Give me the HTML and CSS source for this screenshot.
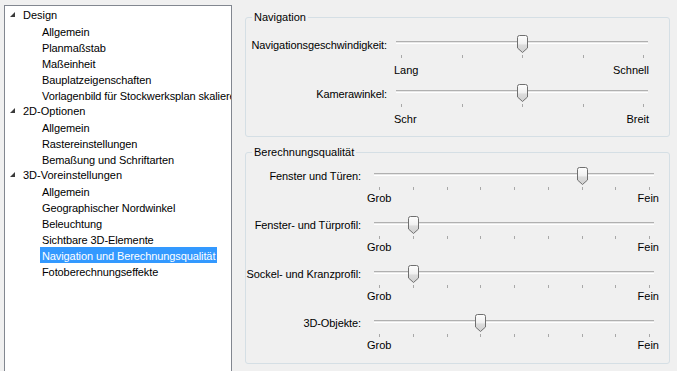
FILE: index.html
```html
<!DOCTYPE html>
<html lang="de">
<head>
  <meta charset="UTF-8">
  <title>Optionen</title>
  <link rel="stylesheet" href="styles.css">
</head>
<body>

  <div class="dialog">

    <!-- Baum links -->
    <div class="tree">
      <div class="node"><span class="arrow"></span>Design</div>
      <div class="leaf"><span>Allgemein</span></div>
      <div class="leaf"><span>Planmaßstab</span></div>
      <div class="leaf"><span>Maßeinheit</span></div>
      <div class="leaf"><span>Bauplatzeigenschaften</span></div>
      <div class="leaf"><span>Vorlagenbild für Stockwerksplan skalieren</span></div>
      <div class="node"><span class="arrow"></span>2D-Optionen</div>
      <div class="leaf"><span>Allgemein</span></div>
      <div class="leaf"><span>Rastereinstellungen</span></div>
      <div class="leaf"><span>Bemaßung und Schriftarten</span></div>
      <div class="node"><span class="arrow"></span>3D-Voreinstellungen</div>
      <div class="leaf"><span>Allgemein</span></div>
      <div class="leaf"><span>Geographischer Nordwinkel</span></div>
      <div class="leaf"><span>Beleuchtung</span></div>
      <div class="leaf"><span>Sichtbare 3D-Elemente</span></div>
      <div class="leaf selected"><span>Navigation und Berechnungsqualität</span></div>
      <div class="leaf"><span>Fotoberechnungseffekte</span></div>
    </div>

    <!-- Einstellungen rechts -->
    <div class="panel">

      <fieldset class="group nav">
        <legend>Navigation</legend>

        <div class="row">
          <label>Navigationsgeschwindigkeit:</label>
          <div class="slider">
            <div class="bar"><div class="track"></div><span class="thumb" style="--v:0.5"><svg width="11" height="18" viewBox="0 0 11 18"><defs><linearGradient id="tg" x1="0" y1="0" x2="0" y2="1"><stop offset="0" stop-color="#fdfdfd"/><stop offset="0.5" stop-color="#f0f0f0"/><stop offset="0.55" stop-color="#dcdcdc"/><stop offset="1" stop-color="#d0d0d0"/></linearGradient></defs><path d="M0.5 2.5 Q0.5 0.5 2.5 0.5 H8.5 Q10.5 0.5 10.5 2.5 V13 L5.5 17.5 L0.5 13 Z" fill="url(#tg)" stroke="#6f6f6f"/></svg></span></div>
            <div class="ticks"><i></i><i></i><i></i><i></i><i></i></div>
            <div class="ends"><span>Lang</span><span>Schnell</span></div>
          </div>
        </div>

        <div class="row">
          <label>Kamerawinkel:</label>
          <div class="slider">
            <div class="bar"><div class="track"></div><span class="thumb" style="--v:0.5"><svg width="11" height="18" viewBox="0 0 11 18"><path d="M0.5 2.5 Q0.5 0.5 2.5 0.5 H8.5 Q10.5 0.5 10.5 2.5 V13 L5.5 17.5 L0.5 13 Z" fill="url(#tg)" stroke="#6f6f6f"/></svg></span></div>
            <div class="ticks"><i></i><i></i><i></i><i></i><i></i></div>
            <div class="ends"><span>Schr</span><span>Breit</span></div>
          </div>
        </div>
      </fieldset>

      <fieldset class="group quality">
        <legend>Berechnungsqualität</legend>

        <div class="row">
          <label>Fenster und Türen:</label>
          <div class="slider">
            <div class="bar"><div class="track"></div><span class="thumb" style="--v:0.75"><svg width="11" height="18" viewBox="0 0 11 18"><path d="M0.5 2.5 Q0.5 0.5 2.5 0.5 H8.5 Q10.5 0.5 10.5 2.5 V13 L5.5 17.5 L0.5 13 Z" fill="url(#tg)" stroke="#6f6f6f"/></svg></span></div>
            <div class="ticks"><i></i><i></i><i></i><i></i><i></i><i></i><i></i><i></i><i></i></div>
            <div class="ends"><span>Grob</span><span>Fein</span></div>
          </div>
        </div>

        <div class="row">
          <label>Fenster- und Türprofil:</label>
          <div class="slider">
            <div class="bar"><div class="track"></div><span class="thumb" style="--v:0.125"><svg width="11" height="18" viewBox="0 0 11 18"><path d="M0.5 2.5 Q0.5 0.5 2.5 0.5 H8.5 Q10.5 0.5 10.5 2.5 V13 L5.5 17.5 L0.5 13 Z" fill="url(#tg)" stroke="#6f6f6f"/></svg></span></div>
            <div class="ticks"><i></i><i></i><i></i><i></i><i></i><i></i><i></i><i></i><i></i></div>
            <div class="ends"><span>Grob</span><span>Fein</span></div>
          </div>
        </div>

        <div class="row">
          <label>Sockel- und Kranzprofil:</label>
          <div class="slider">
            <div class="bar"><div class="track"></div><span class="thumb" style="--v:0.125"><svg width="11" height="18" viewBox="0 0 11 18"><path d="M0.5 2.5 Q0.5 0.5 2.5 0.5 H8.5 Q10.5 0.5 10.5 2.5 V13 L5.5 17.5 L0.5 13 Z" fill="url(#tg)" stroke="#6f6f6f"/></svg></span></div>
            <div class="ticks"><i></i><i></i><i></i><i></i><i></i><i></i><i></i><i></i><i></i></div>
            <div class="ends"><span>Grob</span><span>Fein</span></div>
          </div>
        </div>

        <div class="row">
          <label>3D-Objekte:</label>
          <div class="slider">
            <div class="bar"><div class="track"></div><span class="thumb" style="--v:0.375"><svg width="11" height="18" viewBox="0 0 11 18"><path d="M0.5 2.5 Q0.5 0.5 2.5 0.5 H8.5 Q10.5 0.5 10.5 2.5 V13 L5.5 17.5 L0.5 13 Z" fill="url(#tg)" stroke="#6f6f6f"/></svg></span></div>
            <div class="ticks"><i></i><i></i><i></i><i></i><i></i><i></i><i></i><i></i><i></i></div>
            <div class="ends"><span>Grob</span><span>Fein</span></div>
          </div>
        </div>
      </fieldset>

    </div>
  </div>

</body>
</html>
```

FILE: styles.css
```css
body {
  margin: 0;
  background: #f0f0f0;
  font-family: "Liberation Sans", Arial, sans-serif;
  font-size: 11px;
  color: #000;
  overflow: hidden;
}

.dialog {
  display: flex;
  gap: 13px;
  padding-left: 4px;
}

/* Baum */

.tree {
  width: 228px;
  height: 400px;
  box-sizing: border-box;
  margin-top: 5px;
  padding-top: 1px;
  border: 1px solid #828790;
  background: #fff;
  overflow: hidden;
}

.node, .leaf {
  height: 16px;
  line-height: 18px;
  white-space: nowrap;
}

.node {
  display: flex;
  align-items: center;
  padding-left: 5px;
  gap: 8px;
}

.arrow {
  width: 0;
  height: 0;
  border-left: 5px solid transparent;
  border-bottom: 5px solid #3a3a3a;
  margin-top: -1px;
}

.leaf span {
  display: inline-block;
  height: 16px;
  margin-left: 35px;
  padding: 0 2px;
  letter-spacing: -0.1px;
}

.leaf.selected span {
  background: #3399ff;
  color: #fff;
}

/* Gruppen */

.panel {
  padding-top: 11px;
}

.group {
  width: 425px;
  box-sizing: border-box;
  margin: 0;
  padding: 0;
  border: 1px solid #d5dfe5;
  border-radius: 3px;
}

.group legend {
  margin-left: 6px;
  padding: 0 2px;
  line-height: 13px;
}

.group.nav {
  height: 126px;
  padding-top: 11px;
  display: flex;
  flex-direction: column;
  gap: 7px;
}

.group.quality {
  height: 218px;
  margin-top: 9px;
  padding-top: 8px;
  display: flex;
  flex-direction: column;
  gap: 11px;
}

.row {
  display: grid;
  line-height: 13px;
}

.nav .row {
  grid-template-columns: 141px 252px;
  column-gap: 9px;
}

.quality .row {
  grid-template-columns: 115px 280px;
  column-gap: 13px;
}

.row label {
  text-align: right;
  white-space: nowrap;
  padding-top: 4px;
  letter-spacing: -0.1px;
}

.quality .row label {
  padding-top: 3px;
}

/* Schieberegler */

.bar {
  position: relative;
  height: 18px;
  box-sizing: border-box;
  padding-top: 6px;
}

.track {
  height: 1px;
  border-top: 1px solid #b0b0b0;
  border-bottom: 1px solid #fff;
  background: #e7e7e7;
}

.thumb {
  position: absolute;
  top: 0;
  left: calc(var(--v) * (100% - 10px));
  width: 11px;
  height: 18px;
}

.thumb svg {
  display: block;
}

.ticks {
  display: flex;
  justify-content: space-between;
  padding: 0 4px 0 5px;
  margin-top: 2px;
}

.ticks i {
  width: 1px;
  height: 3px;
  background: #a8a8a8;
}

.ends {
  display: flex;
  justify-content: space-between;
}

.nav .ends {
  margin: 6px -1px 0 -2px;
}

.quality .ends {
  margin: 2px -5px 0 -7px;
}
```
